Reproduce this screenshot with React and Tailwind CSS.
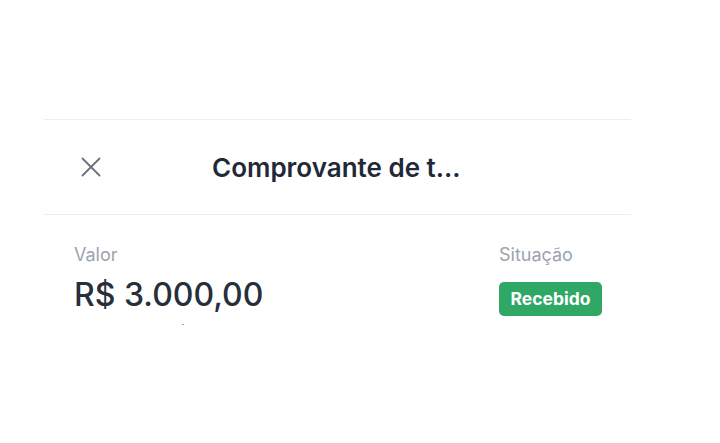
import { X } from 'lucide-react';

export default function App() {
  return (
    <div className="w-[720px] h-[443px] bg-white font-['Inter',sans-serif] pt-[119px] pl-[44px]">
      <div className="w-[587px]">
        {/* Header */}
        <div className="h-[96px] border-t border-b border-[#ececec] flex items-center">
          <button className="ml-[30px] text-[#6b7280]">
            <X size={34} strokeWidth={1.3} />
          </button>
          <h1 className="ml-[104px] text-[26px] font-semibold text-[#1f2937]">
            Comprovante de t...
          </h1>
        </div>

        {/* Details */}
        <div className="flex justify-between pl-[30px] pr-[29px] pt-[28px]">
          <div>
            <p className="text-[18px] text-[#9ca3af] leading-[24px]">Valor</p>
            <p className="mt-[10px] text-[32px] leading-[36px] font-medium text-[#262f3b]">
              R$ 3.000,00
            </p>
            <div className="ml-[108px] mt-[11px] w-[2px] h-[1px] bg-[#9ca3af]" />
          </div>
          <div className="w-[103px]">
            <p className="text-[18px] text-[#9ca3af] leading-[24px]">Situação</p>
            <span className="mt-[15px] inline-flex items-center justify-center w-[103px] h-[34px] rounded-[5px] bg-[#2fa866] text-white text-[17.5px] font-bold">
              Recebido
            </span>
          </div>
        </div>
      </div>
    </div>
  );
}
